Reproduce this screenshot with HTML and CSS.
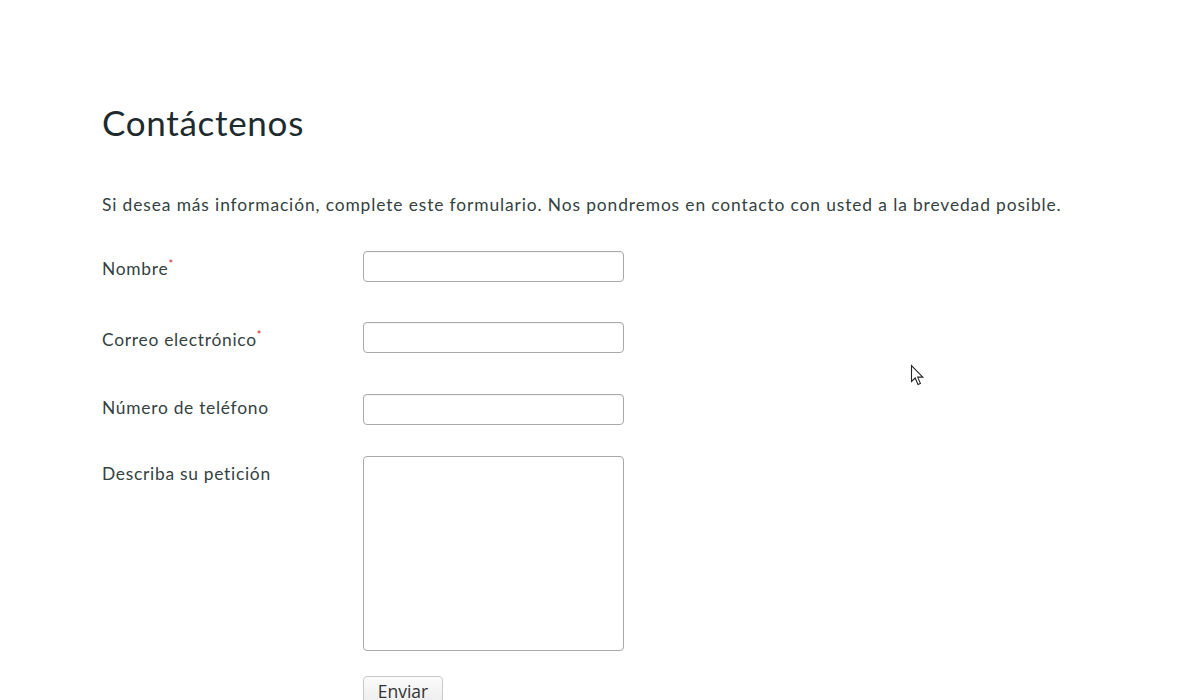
FILE: index.html
```html
<!DOCTYPE html>
<html lang="es">
<head>
<meta charset="utf-8">
<title>Contáctenos</title>
<link rel="stylesheet" href="styles.css">
</head>
<body>
<main class="page">
  <h1 class="title">Contáctenos</h1>
  <p class="intro">Si desea más información, complete este formulario. Nos pondremos en contacto con usted a la brevedad posible.</p>
  <form class="form">
    <div class="row row-1">
      <label class="label">Nombre<span class="req">*</span></label>
      <input class="field" type="text">
    </div>
    <div class="row row-2">
      <label class="label">Correo electrónico<span class="req">*</span></label>
      <input class="field" type="text">
    </div>
    <div class="row row-3">
      <label class="label label-tel">Número de teléfono</label>
      <input class="field" type="text">
    </div>
    <div class="row row-4">
      <label class="label">Describa su petición</label>
      <textarea class="area"></textarea>
    </div>
    <div class="row row-5">
      <span class="label"></span>
      <button class="btn" type="button">Enviar</button>
    </div>
  </form>
</main>
<svg class="cursor" width="16" height="24" viewBox="0 0 16 24">
  <path d="M1.5 1.5 L1.5 17.5 L5.2 14 L8 20.5 L10.4 19.4 L7.7 13.1 L12.8 13.1 Z" fill="#fff" stroke="#222" stroke-width="1.1" stroke-linejoin="miter"/>
</svg>
</body>
</html>
```

FILE: styles.css
```css
html, body {
  margin: 0;
  padding: 0;
  background: #ffffff;
  height: 700px;
  overflow: hidden;
}
body {
  font-family: Lato, "Open Sans", "Liberation Sans", sans-serif;
  color: #2e3b3e;
  position: relative;
}
.page {
  padding: 100px 0 0 102px;
}
.title {
  margin: 0;
  font-size: 35px;
  line-height: 44px;
  font-weight: 400;
  color: #1e2b2e;
  letter-spacing: 0.7px;
}
.intro {
  margin: 49px 0 0 0;
  font-size: 17.4px;
  line-height: 24px;
  color: #33423f;
  letter-spacing: 0.88px;
  white-space: nowrap;
}
.form {
  margin-top: 34px;
}
.row {
  display: flex;
  align-items: flex-start;
}
.row-1, .row-2, .row-3 { height: 31px; }
.row-2 { margin-top: 40px; }
.row-3 { margin-top: 41px; }
.row-4 { margin-top: 31px; }
.row-5 { margin-top: 25px; }
.label {
  width: 261px;
  flex: none;
  font-size: 17.4px;
  line-height: 20px;
  padding-top: 8px;
  color: #33423f;
  letter-spacing: 0.72px;
}
.label-tel { padding-top: 4px; }
.req {
  color: #d0202a;
  font-size: 11px;
  line-height: 0;
  vertical-align: 7px;
  margin-left: 0;
  letter-spacing: 0;
}
.field {
  box-sizing: border-box;
  width: 261px;
  height: 31px;
  margin: 0;
  border: 1px solid #a9a9a9;
  border-radius: 4px;
  background: #fff;
  box-shadow: inset 0 1px 1px rgba(0,0,0,0.04);
}
.area {
  box-sizing: border-box;
  width: 261px;
  height: 195px;
  margin: 0;
  border: 1px solid #a9a9a9;
  border-radius: 4px;
  background: #fff;
  resize: none;
}
.btn {
  box-sizing: border-box;
  height: 30px;
  width: 80px;
  padding: 0;
  margin: 0;
  border: 1px solid #c9c9c9;
  border-radius: 4px;
  background: linear-gradient(#fbfbfb, #ececec);
  font-family: "Open Sans", "Liberation Sans", sans-serif;
  font-size: 17.5px;
  color: #333;
  line-height: 28px;
  text-align: center;
}
.cursor {
  position: absolute;
  left: 910px;
  top: 364px;
}
```
